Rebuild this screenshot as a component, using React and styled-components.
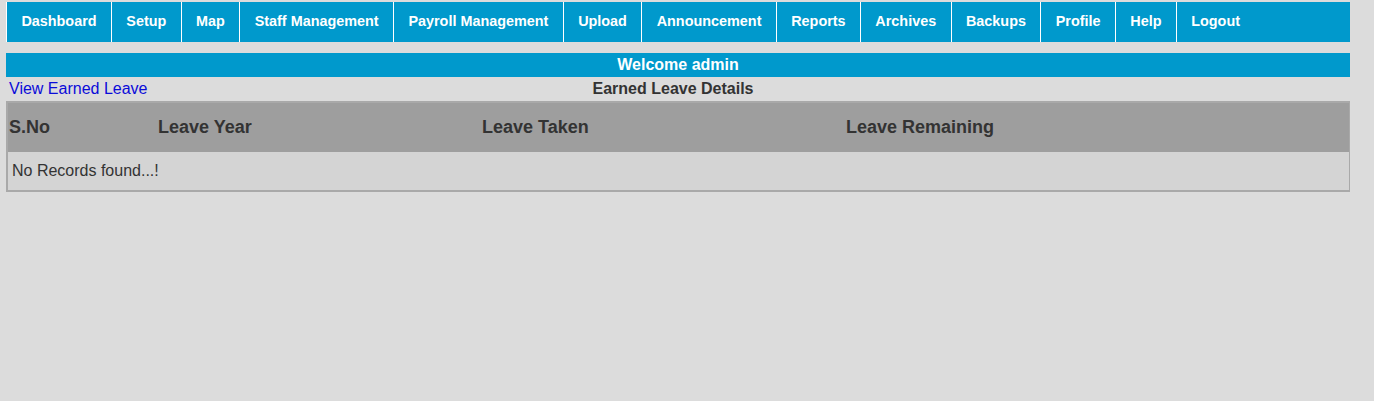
import React from 'react';
import styled, { createGlobalStyle } from 'styled-components';

const GlobalStyle = createGlobalStyle`
  html, body {
    margin: 0;
    padding: 0;
    background: #dcdcdc;
    font-family: "Liberation Sans", Arial, sans-serif;
  }
`;

const Page = styled.div`
  width: 1344px;
  padding: 2px 0 0 6px;
`;

const Nav = styled.ul`
  display: flex;
  margin: 0;
  padding: 0;
  list-style: none;
  height: 40px;
  background: #0099cc;
`;

const NavItem = styled.li`
  display: flex;
  align-items: center;
  padding: 0 14.4px 2px;
  border-left: 1px solid #ffffff;
  color: #ffffff;
  font-size: 14.4px;
  font-weight: bold;
  cursor: pointer;
`;

const Welcome = styled.div`
  margin-top: 11px;
  height: 24px;
  line-height: 24px;
  background: #0099cc;
  color: #ffffff;
  font-size: 16px;
  font-weight: bold;
  text-align: center;
`;

const InfoRow = styled.div`
  display: grid;
  grid-template-columns: 1fr auto 1fr;
  align-items: center;
  height: 24px;
  padding: 0 13px 0 3px;
`;

const Link = styled.a`
  color: #0b0bd9;
  font-size: 16px;
  text-decoration: none;
  cursor: pointer;
`;

const Title = styled.div`
  color: #333333;
  font-size: 16px;
  font-weight: bold;
`;

const Table = styled.table`
  box-sizing: border-box;
  width: 1344px;
  border: 2px solid #a9a9a9;
  border-right-width: 1px;
  border-collapse: separate;
  border-spacing: 0;
  table-layout: fixed;
`;

const HeadCell = styled.th`
  height: 49px;
  padding: 0 1px;
  background: #9e9e9e;
  color: #333333;
  font-size: 18px;
  font-weight: bold;
  text-align: left;
  width: ${p => p.$w}px;
`;

const Cell = styled.td`
  height: 38px;
  padding: 0 4px;
  background: #d4d4d4;
  color: #333333;
  font-size: 16px;
`;

const menu = ['Dashboard', 'Setup', 'Map', 'Staff Management', 'Payroll Management', 'Upload',
  'Announcement', 'Reports', 'Archives', 'Backups', 'Profile', 'Help', 'Logout'];

const columns = [
  { label: 'S.No', w: 147 },
  { label: 'Leave Year', w: 322 },
  { label: 'Leave Taken', w: 362 },
  { label: 'Leave Remaining', w: 502 },
];

const App = () => {
  return (
    <Page>
      <GlobalStyle />
      <Nav>
        {menu.map(m => <NavItem key={m}>{m}</NavItem>)}
      </Nav>
      <Welcome>Welcome admin</Welcome>
      <InfoRow>
        <Link>View Earned Leave</Link>
        <Title>Earned Leave Details</Title>
        <span />
      </InfoRow>
      <Table>
        <thead>
          <tr>
            {columns.map(c => <HeadCell key={c.label} $w={c.w}>{c.label}</HeadCell>)}
          </tr>
        </thead>
        <tbody>
          <tr>
            <Cell colSpan={4}>No Records found...!</Cell>
          </tr>
        </tbody>
      </Table>
    </Page>
  );
};

export default App;
